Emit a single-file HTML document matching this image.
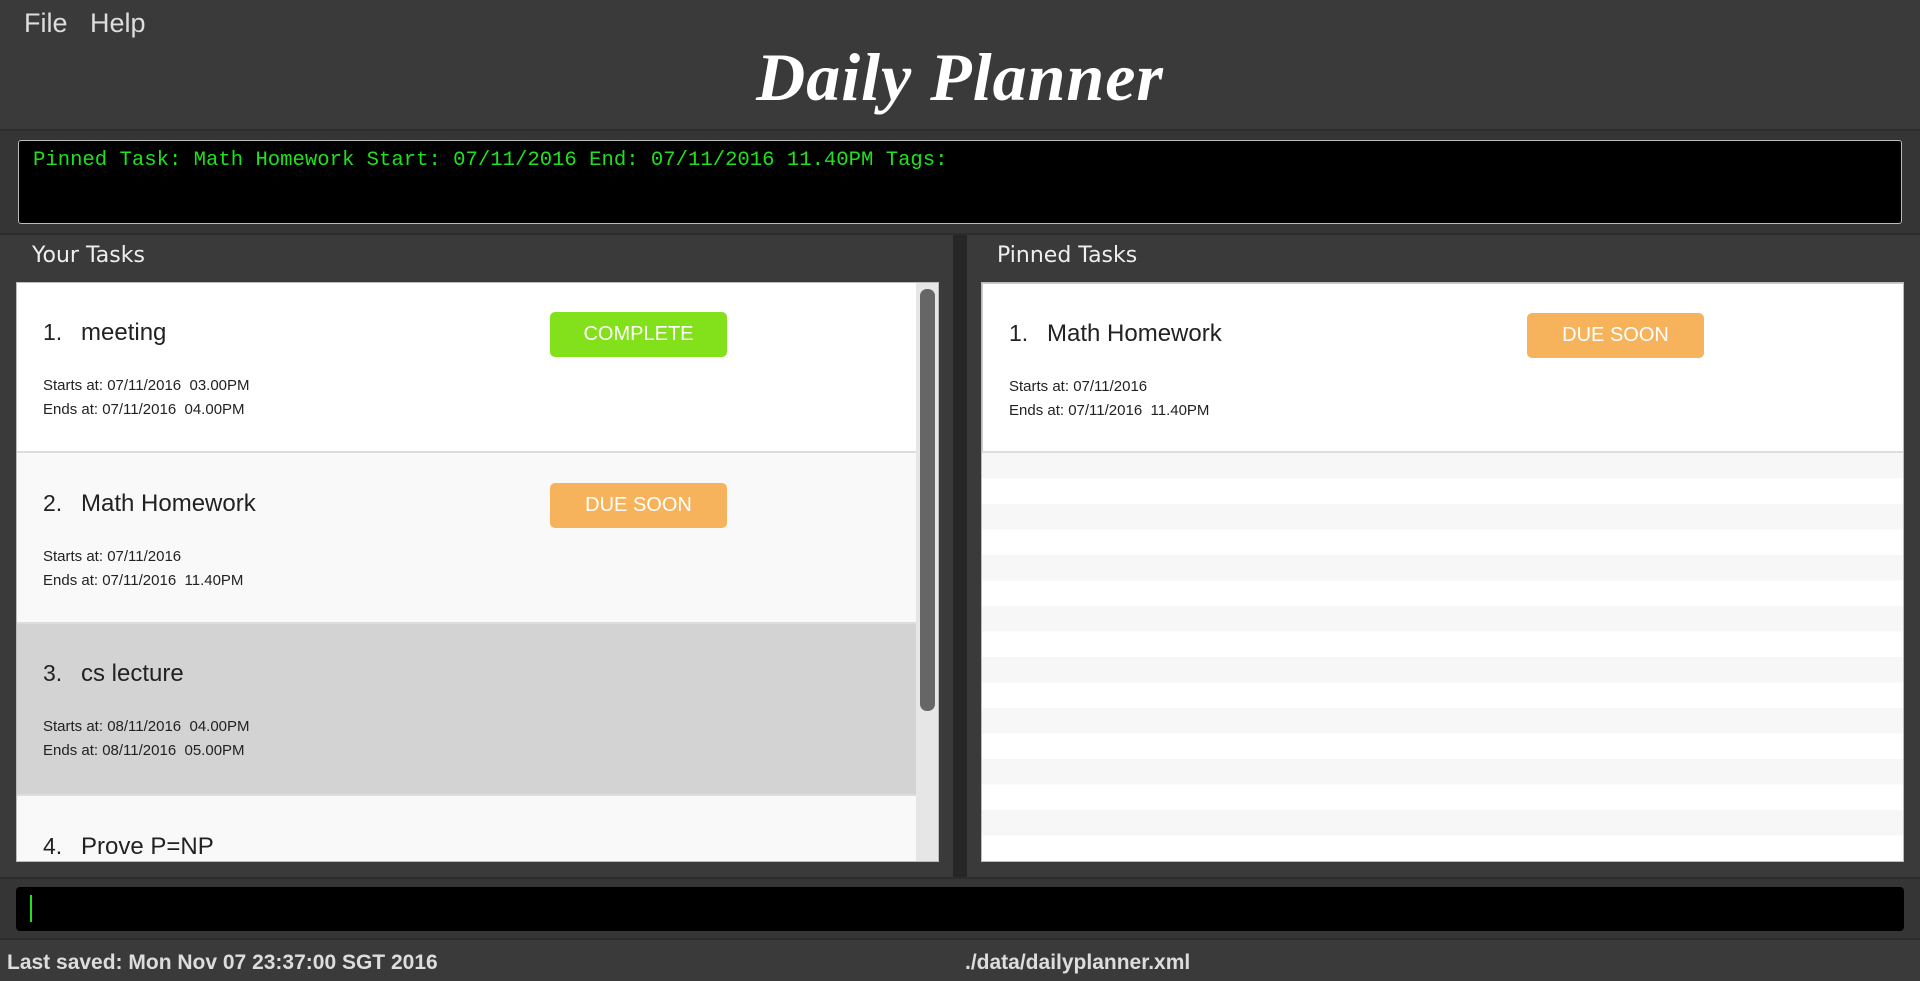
<!DOCTYPE html>
<html><head><meta charset="utf-8"><style>
*{margin:0;padding:0;box-sizing:border-box}
body{width:1920px;height:981px;background:#3a3a3a;position:relative;overflow:hidden;font-family:"Liberation Sans","DejaVu Sans",sans-serif}
.abs{position:absolute}
.menu{top:8px;font-size:27px;color:#ddd;font-family:"Liberation Sans",sans-serif}
.title{left:0;width:1920px;text-align:center;top:38px;font-family:"Liberation Serif",serif;font-style:italic;font-weight:bold;font-size:68px;color:#fff;letter-spacing:1px}
.card{position:absolute;left:0;width:900px;height:170px;border-bottom:2px solid #ddd}
.num{position:absolute;left:26px;top:36px;font-size:23px;color:#222;font-family:"Liberation Sans",sans-serif}
.ttl{position:absolute;left:64px;top:36px;font-size:24px;color:#222;font-family:"Liberation Sans",sans-serif}
.badge{position:absolute;left:533px;top:29px;width:177px;height:45px;border-radius:5px;color:#fff;font-size:20px;text-align:center;line-height:45px;font-family:"Liberation Sans",sans-serif}
.d{position:absolute;left:26px;font-size:15px;color:#222;font-family:"Liberation Sans",sans-serif}
.lbl{font-size:22px;color:#eee;font-family:"DejaVu Sans",sans-serif}
.st{top:951px;font-size:21px;color:#ddd;font-family:'Liberation Sans',sans-serif;font-weight:bold}
</style></head><body>
<div class="abs menu" style="left:24px">File</div>
<div class="abs menu" style="left:90px">Help</div>
<div class="abs title">Daily Planner</div>

<div class="abs" style="left:0;top:129px;width:1920px;height:2px;background:#2c2c2c"></div>
<div class="abs" style="left:0;top:131px;width:1920px;height:102px;background:#353535"></div>
<div class="abs" style="left:18px;top:140px;width:1884px;height:84px;background:#000;border:1px solid #bbb;border-radius:3px"></div>
<div class="abs" style="left:33px;top:149px;font-family:'Liberation Mono',monospace;font-size:20.6px;color:#1ee21e;white-space:nowrap">Pinned Task: Math Homework Start: 07/11/2016 End: 07/11/2016 11.40PM Tags:</div>
<div class="abs" style="left:0;top:233px;width:1920px;height:2px;background:#2c2c2c"></div>

<div class="abs lbl" style="left:32px;top:243px">Your Tasks</div>
<div class="abs lbl" style="left:997px;top:243px">Pinned Tasks</div>
<div class="abs" style="left:953px;top:235px;width:14px;height:643px;background:#262626"></div>

<div class="abs" style="left:16px;top:282px;width:923px;height:580px;background:#f9f9f9;border:1px solid #bbb;overflow:hidden">
 <div class="card" style="top:0;background:#fff"><div class="num">1.</div><div class="ttl">meeting</div><div class="badge" style="background:#82e11a">COMPLETE</div><div class="d" style="top:94px">Starts at: 07/11/2016&nbsp; 03.00PM</div><div class="d" style="top:118px">Ends at: 07/11/2016&nbsp; 04.00PM</div></div>
 <div class="card" style="top:171px;background:#f9f9f9"><div class="num">2.</div><div class="ttl">Math Homework</div><div class="badge" style="background:#f7b35b">DUE SOON</div><div class="d" style="top:94px">Starts at: 07/11/2016</div><div class="d" style="top:118px">Ends at: 07/11/2016&nbsp; 11.40PM</div></div>
 <div class="card" style="top:341px;background:#d3d3d3;height:172px"><div class="num">3.</div><div class="ttl">cs lecture</div><div class="d" style="top:94px">Starts at: 08/11/2016&nbsp; 04.00PM</div><div class="d" style="top:118px">Ends at: 08/11/2016&nbsp; 05.00PM</div></div>
 <div class="card" style="top:514px;background:#f9f9f9"><div class="num">4.</div><div class="ttl">Prove P=NP</div></div>
 <div class="abs" style="left:899px;top:0;width:24px;height:580px;background:#e6e6e6"></div>
 <div class="abs" style="left:903px;top:6px;width:15px;height:422px;background:#666;border-radius:7px"></div>
</div>

<div class="abs" style="left:981px;top:282px;width:923px;height:580px;border:1px solid #bbb;overflow:hidden;background:repeating-linear-gradient(#f7f7f7 0 25.5px,#fff 25.5px 51px);background-position:0 170px">
 <div class="card" style="top:0;background:#fff;width:923px;border:1px solid #ccc;border-bottom:2px solid #ddd"><div class="num">1.</div><div class="ttl">Math Homework</div><div class="badge" style="background:#f7b35b;left:544px">DUE SOON</div><div class="d" style="top:94px">Starts at: 07/11/2016</div><div class="d" style="top:118px">Ends at: 07/11/2016&nbsp; 11.40PM</div></div>
</div>

<div class="abs" style="left:0;top:877px;width:1920px;height:2px;background:#2c2c2c"></div>
<div class="abs" style="left:0;top:879px;width:1920px;height:59px;background:#353535"></div>
<div class="abs" style="left:16px;top:887px;width:1888px;height:44px;background:#000;border-radius:4px"></div>
<div class="abs" style="left:30px;top:895px;width:2px;height:27px;background:#1ee21e"></div>
<div class="abs" style="left:0;top:938px;width:1920px;height:2px;background:#2c2c2c"></div>
<div class="abs st" style="left:7px">Last saved: Mon Nov 07 23:37:00 SGT 2016</div>
<div class="abs st" style="left:965px">./data/dailyplanner.xml</div>
</body></html>
